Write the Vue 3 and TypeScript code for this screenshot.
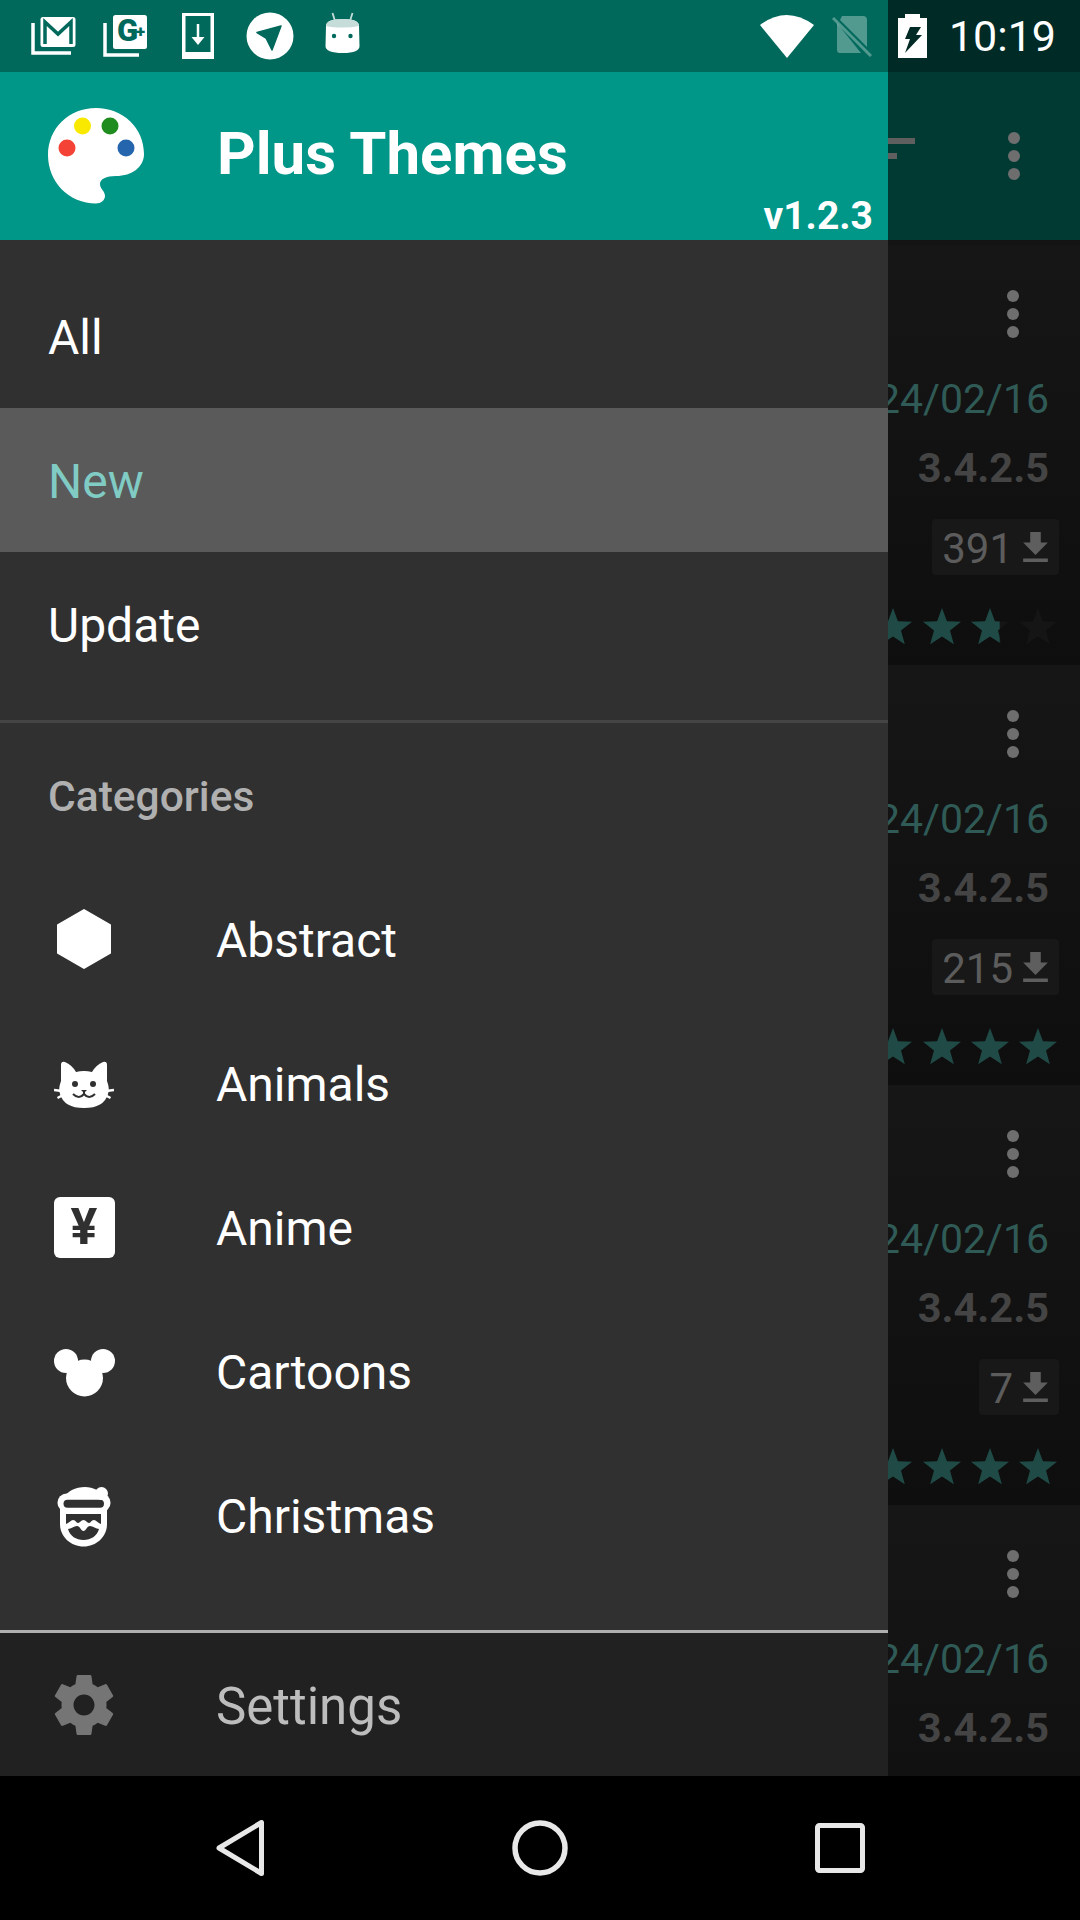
<script setup lang="ts">
interface MenuItem {
  label: string
  icon: string
}

interface AppCard {
  downloads: number
  rating: number
}

const categories: MenuItem[] = [
  { label: 'Abstract', icon: 'hexagon' },
  { label: 'Animals', icon: 'cat' },
  { label: 'Anime', icon: 'yen' },
  { label: 'Cartoons', icon: 'mouse' },
  { label: 'Christmas', icon: 'santa' },
]

// last card runs off the bottom of the screen, only its date and version show
const cards: AppCard[] = [
  { downloads: 391, rating: 3.7 },
  { downloads: 215, rating: 5 },
  { downloads: 7, rating: 5 },
  { downloads: 0, rating: 0 },
]

const starPoints = (cx: number) => {
  const pts: string[] = []
  for (let i = 0; i < 10; i++) {
    const r = i % 2 === 0 ? 20 : 8.4
    const a = (Math.PI / 5) * i - Math.PI / 2
    pts.push(`${(cx + r * Math.cos(a)).toFixed(1)},${(20 + r * Math.sin(a)).toFixed(1)}`)
  }
  return pts.join(' ')
}

const starCenters = [24, 72, 121, 169, 217]
</script>

<template>
  <div class="phone">
    <div class="screen">
      <!-- app behind the drawer -->
      <div class="app">
        <div class="app-status"></div>
        <div class="app-toolbar">
          <div class="filter-icon">
            <span class="bar long"></span>
            <span class="bar short"></span>
            <span class="bar tiny"></span>
          </div>
          <div class="dots"><i></i><i></i><i></i></div>
        </div>
        <div class="app-list">
          <div v-for="(card, i) in cards" :key="i" class="card">
            <div class="dots"><i></i><i></i><i></i></div>
            <div class="date">24/02/16</div>
            <div class="version">3.4.2.5</div>
            <template v-if="card.downloads">
              <div class="badge">
                <span class="count">{{ card.downloads }}</span>
                <svg width="27" height="30" viewBox="4.5 3 15 17">
                  <path fill="#5e5e5e" d="M19 9h-4V3H9v6H5l7 7 7-7zM5 18v2h14v-2H5z" />
                </svg>
              </div>
              <svg class="stars" width="241" height="40" viewBox="0 0 241 40">
                <defs>
                  <clipPath :id="`fill-${i}`">
                    <rect x="0" y="0" :width="card.rating * 48.3" height="40" />
                  </clipPath>
                </defs>
                <polygon v-for="c in starCenters" :key="c" :points="starPoints(c)" fill="#151515" />
                <g :clip-path="`url(#fill-${i})`">
                  <polygon v-for="c in starCenters" :key="c" :points="starPoints(c)" fill="#1f4a46" />
                </g>
              </svg>
            </template>
          </div>
        </div>
      </div>

      <!-- drawer -->
      <aside class="drawer">
        <div class="drawer-status"></div>
        <header class="drawer-header">
          <svg class="palette" width="96" height="96" viewBox="0 0 96 96">
            <path fill="#fff" d="M48 0C75 0 96 20 96 46C96 59 84 68 68 68C58 68 52 71 52 76C52 81 57 83 57 88C57 92 53 95.500 48 95.500C21 95.500 0 74 0 47C0 20 21 0 48 0Z" />
            <circle cx="34.500" cy="18" r="8.500" fill="#f9e800" />
            <circle cx="62" cy="18" r="8.500" fill="#1e8c1e" />
            <circle cx="19" cy="40" r="8.500" fill="#f44336" />
            <circle cx="78" cy="40" r="8.500" fill="#2565ad" />
          </svg>
          <h1 class="title">Plus Themes</h1>
          <span class="version-tag">v1.2.3</span>
        </header>

        <nav class="drawer-body">
          <div class="section">
            <div class="row plain">All</div>
            <div class="row plain selected">New</div>
            <div class="row plain">Update</div>
          </div>
          <div class="divider"></div>
          <div class="subheader">Categories</div>
          <div v-for="item in categories" :key="item.label" class="row">
            <span class="row-icon">
              <svg v-if="item.icon === 'hexagon'" class="lift" width="54" height="60" viewBox="0 0 54 60">
                <path fill="#fff" stroke="#fff" stroke-width="2" stroke-linejoin="round" d="M27 1L53 16V44L27 59L1 44V16Z" />
              </svg>
              <svg v-else-if="item.icon === 'cat'" width="60" height="48" viewBox="0 0 60 48">
                <path fill="#fff" d="M7 4Q7 0 11 1Q18 4 22 11Q30 9 38 11Q42 4 49 1Q53 0 53 4L53 20Q56 28 54 33Q50 47 30 47Q10 47 6 33Q4 28 7 20Z" />
                <path stroke="#fff" stroke-width="2.500" fill="none" d="M0 29L8 30M3.500 37L10 33.500M60 29L52 30M56.500 37L50 33.500" />
                <circle cx="21" cy="23" r="3" fill="#303030" />
                <circle cx="39" cy="23" r="3" fill="#303030" />
                <path stroke="#303030" stroke-width="2" fill="none" d="M19 33Q25 39 30 33Q35 39 41 33M30 33V31" />
                <path fill="#303030" d="M27 29H33L30 32Z" />
              </svg>
              <span v-else-if="item.icon === 'yen'" class="yen lift">¥</span>
              <svg v-else-if="item.icon === 'mouse'" width="61" height="48" viewBox="0 0 61 48">
                <circle cx="12" cy="12" r="12" fill="#fff" />
                <circle cx="49" cy="12" r="12" fill="#fff" />
                <circle cx="30.500" cy="29" r="18.500" fill="#fff" />
              </svg>
              <svg v-else-if="item.icon === 'santa'" width="54" height="60" viewBox="0 0 54 60">
                <path fill="#fff" d="M3 20V37C3 50 14 59.500 26.500 59.500C39 59.500 50 50 50 37V20Z" />
                <path fill="#303030" d="M9 27H44V37C41 36 39 33 37 33C34 33 34 36 32 36C30 36 29 33 26.500 33C24 33 23 36 21 36C19 36 19 33 16 33C14 33 12 36 9 37Z" />
                <path fill="#303030" d="M11 42C14 42 17 39 20 39C23 39 24 44 26.500 44C29 44 30 39 33 39C36 39 39 42 42 42C40 49 34 53 26.500 53C19 53 13 49 11 42Z" />
                <path fill="#fff" d="M7 12C9 4 19 0 28 0C32 0 36 1 40 3L46 10V14H7Z" />
                <rect x="0.500" y="6.500" width="53" height="18.500" rx="9" fill="#fff" />
                <rect x="6.500" y="12.700" width="40.500" height="8" rx="4" fill="#303030" />
                <circle cx="44.500" cy="6.500" r="6.500" fill="#fff" />
              </svg>
            </span>
            <span class="row-label">{{ item.label }}</span>
          </div>
        </nav>

        <footer class="drawer-footer">
          <span class="row-icon">
            <svg width="72" height="72" viewBox="0 0 24 24">
              <path fill="#757575" d="M19.430 12.980c.04-.32.07-.64.07-.98s-.03-.66-.07-.98l2.110-1.650c.19-.15.24-.42.12-.64l-2-3.460c-.12-.22-.39-.3-.61-.22l-2.490 1c-.52-.4-1.080-.73-1.690-.98l-.38-2.650C14.460 2.180 14.250 2 14 2h-4c-.25 0-.46.18-.49.42l-.38 2.650c-.61.25-1.170.59-1.690.98l-2.490-1c-.23-.09-.49 0-.61.22l-2 3.460c-.13.22-.07.49.12.64l2.110 1.650c-.04.32-.07.65-.07.98s.03.66.07.98l-2.110 1.650c-.19.15-.24.42-.12.64l2 3.460c.12.22.39.3.61.22l2.490-1c.52.4 1.080.73 1.690.98l.38 2.650c.03.24.24.42.49.42h4c.25 0 .46-.18.49-.42l.38-2.650c.61-.25 1.170-.59 1.690-.98l2.490 1c.23.09.49 0 .61-.22l2-3.460c.12-.22.07-.49-.12-.64l-2.110-1.650zM12 15.500c-1.930 0-3.500-1.570-3.500-3.500s1.570-3.500 3.500-3.500 3.500 1.570 3.500 3.500-1.570 3.500-3.500 3.500z" />
            </svg>
          </span>
          <span class="row-label settings">Settings</span>
        </footer>
      </aside>

      <!-- status bar icons sit above both the drawer and the app -->
      <div class="status-icons">
        <div class="status-left">
          <svg width="72" height="72" viewBox="0 0 72 72">
            <path fill="none" stroke="#fff" stroke-width="3.500" d="M15 23V53H53" />
            <rect x="22.500" y="17" width="35" height="30" rx="2.500" fill="#fff" />
            <path fill="none" stroke="#00695c" stroke-width="3.500" d="M27 44V22L40 34L53 22V44" />
          </svg>
          <svg width="72" height="72" viewBox="0 0 72 72">
            <path fill="none" stroke="#fff" stroke-width="3.500" d="M15 23V55H49" />
            <rect x="23" y="15" width="34" height="34" rx="2.500" fill="#fff" />
            <text x="27" y="41" class="gplus-g">G</text>
            <text x="46" y="37" class="gplus-plus">+</text>
          </svg>
          <svg width="72" height="72" viewBox="0 0 72 72">
            <path fill="#fff" fill-rule="evenodd" d="M20 13H52V59H20ZM23.500 16V52H48.500V16Z" />
            <path fill="none" stroke="#fff" stroke-width="2.500" d="M36 24V40" />
            <path fill="#fff" d="M29.500 37H42.500L36 45Z" />
          </svg>
          <svg width="72" height="72" viewBox="0 0 72 72">
            <circle cx="36" cy="36" r="23.500" fill="#fff" />
            <path fill="#00695c" stroke="#00695c" stroke-width="1.500" stroke-linejoin="round" d="M47 26L23 32.500L32 38L38 50Z" />
          </svg>
          <svg width="72" height="72" viewBox="0 0 72 72">
            <path fill="#fff" d="M20 26Q20 19 37 19Q53 19 53 26L53.500 46Q53.500 53 37 53Q19.500 53 19.500 46Z" />
            <path fill="#c5dcd9" d="M20 26Q20 19 37 19Q53 19 53 26Q46 27.500 37 27.500Q27 27.500 20 26Z" />
            <circle cx="28" cy="36" r="2.200" fill="#00695c" />
            <circle cx="44.500" cy="36" r="2.200" fill="#00695c" />
            <path stroke="#c5dcd9" stroke-width="1.800" d="M26.500 13L29 21M46.500 13L44 21" />
          </svg>
        </div>
        <div class="status-right">
          <svg class="wifi" width="54" height="44" viewBox="0 0 54 44">
            <path fill="#fff" d="M0 11Q26.500 -9 54 11L27 44Z" />
          </svg>
          <svg class="sim" width="40" height="42" viewBox="0 0 40 42">
            <path fill="#fff" fill-opacity="0.32" d="M8 5L10 1H31Q35 1 35 5V32ZM5 8L29 38H8Q5 38 5 35Z" />
            <path stroke="#fff" stroke-opacity="0.32" stroke-width="3" d="M1 3L39 41" />
          </svg>
          <svg class="battery" width="29" height="44" viewBox="0 0 29 44">
            <path fill="#fff" d="M7 0H22V4H29V44H0V4H7Z" />
            <path fill="#002a25" d="M12 13H23L18 21H24L7 39L12 25H7Z" />
          </svg>
          <span class="clock">10:19</span>
        </div>
      </div>
    </div>

    <div class="navbar">
      <svg width="48" height="56" viewBox="0 0 48 56">
        <path fill="none" stroke="#e8e8e8" stroke-width="5" stroke-linejoin="round" d="M45.500 2.500V53.500L3 28Z" />
      </svg>
      <svg width="56" height="56" viewBox="0 0 56 56">
        <circle cx="28" cy="28" r="25" fill="none" stroke="#e8e8e8" stroke-width="5.500" />
      </svg>
      <svg width="50" height="50" viewBox="0 0 50 50">
        <rect x="2.500" y="2.500" width="45" height="45" rx="2" fill="none" stroke="#e8e8e8" stroke-width="5" />
      </svg>
    </div>
  </div>
</template>

<style>
html,
body {
  margin: 0;
  background: #000;
}
</style>

<style scoped>
.phone {
  width: 1080px;
  height: 1920px;
  display: flex;
  flex-direction: column;
  font-family: Roboto, "Liberation Sans", sans-serif;
  overflow: hidden;
}

.screen {
  position: relative;
  height: 1776px;
  flex: none;
  overflow: hidden;
}

/* app behind drawer */
.app {
  height: 100%;
  display: flex;
  flex-direction: column;
  background: #141414;
}

.app-status {
  height: 72px;
  flex: none;
  background: #002a25;
}

.app-toolbar {
  height: 168px;
  flex: none;
  background: #003a33;
  display: flex;
  align-items: center;
  justify-content: flex-end;
  padding-right: 60px;
  gap: 93px;
  box-sizing: border-box;
}

.filter-icon {
  display: flex;
  flex-direction: column;
  gap: 9px;
  width: 60px;
}

.bar {
  display: block;
  height: 6px;
  background: #5f5f5f;
}

.bar.long {
  width: 60px;
}

.bar.short {
  width: 42px;
}

.bar.tiny {
  width: 24px;
}

.dots {
  display: flex;
  flex-direction: column;
  gap: 6px;
  width: 12px;
}

.dots i {
  display: block;
  width: 12px;
  height: 12px;
  border-radius: 50%;
  background: #6e6e6e;
}

.app-list {
  display: flex;
  flex-direction: column;
  padding-top: 5px;
}

.card {
  height: 420px;
  flex: none;
  background: linear-gradient(#161616, #0e0e0e);
  display: flex;
  flex-direction: column;
  align-items: flex-end;
  padding: 45px 21px 0 0;
  box-sizing: border-box;
}

.card .dots {
  margin-right: 40px;
}

.date {
  margin-top: 37px;
  padding-right: 10px;
  font-size: 41px;
  line-height: 48px;
  color: #2f5a56;
}

.version {
  margin-top: 21px;
  padding-right: 10px;
  font-size: 41.500px;
  line-height: 48px;
  font-weight: 700;
  color: #444;
}

.badge {
  margin-top: 27px;
  height: 56px;
  padding: 0 10px;
  display: flex;
  align-items: center;
  gap: 9px;
  font-size: 42px;
  color: #5c5c5c;
  background: #181818;
  border-radius: 4px;
}

.count {
  padding-top: 3px;
}

.stars {
  margin-top: 33px;
  margin-right: -3px;
}

/* drawer */
.drawer {
  position: absolute;
  top: 0;
  left: 0;
  bottom: 0;
  width: 888px;
  background: #303030;
  display: flex;
  flex-direction: column;
}

.drawer-status {
  height: 72px;
  background: #00695c;
  flex: none;
}

.drawer-header {
  position: relative;
  height: 168px;
  flex: none;
  background: #009688;
  display: flex;
  align-items: center;
  padding-left: 48px;
  box-sizing: border-box;
  color: #fff;
}

.palette {
  flex: none;
  margin-right: 73px;
  margin-top: -1px;
}

.title {
  margin: 0 0 4px;
  font-size: 60px;
  font-weight: 700;
  line-height: 1;
}

.version-tag {
  position: absolute;
  right: 15px;
  bottom: 1px;
  font-size: 39px;
  font-weight: 700;
}

.drawer-body {
  flex: 1;
  display: flex;
  flex-direction: column;
}

.section {
  padding: 24px 0;
}

.row {
  height: 144px;
  display: flex;
  align-items: center;
  color: #fff;
  font-size: 48px;
  padding-left: 48px;
  box-sizing: border-box;
}

.row.plain {
  padding-top: 2px;
}

.row.selected {
  background: #5a5a5a;
  color: #80cbc4;
}

.divider {
  height: 3px;
  background: #454545;
}

.subheader {
  height: 146px;
  display: flex;
  align-items: center;
  padding-left: 48px;
  font-size: 42.500px;
  font-weight: 500;
  color: #b0b0b0;
}

.row-icon {
  width: 72px;
  height: 72px;
  margin-right: 96px;
  flex: none;
  display: flex;
  align-items: center;
  justify-content: center;
}

.row-label {
  line-height: 1;
}

.lift {
  margin-bottom: 4px;
}

.yen {
  width: 61px;
  height: 61px;
  background: #fff;
  border-radius: 6px;
  color: #303030;
  font-size: 50px;
  font-weight: 700;
  display: flex;
  align-items: center;
  justify-content: center;
}

.drawer-footer {
  height: 146px;
  flex: none;
  background: #212121;
  border-top: 3px solid #b0b0b0;
  box-sizing: border-box;
  display: flex;
  align-items: center;
  padding-left: 48px;
  color: #bdbdbd;
  font-size: 51px;
}

.settings {
  margin-top: 4px;
}

/* status bar */
.status-icons {
  position: absolute;
  top: 0;
  left: 0;
  right: 0;
  height: 72px;
  display: flex;
  justify-content: space-between;
  align-items: center;
  padding: 0 24px 0 18px;
  box-sizing: border-box;
}

.status-left,
.status-right {
  display: flex;
  align-items: center;
}

.gplus-g {
  font-family: Roboto, sans-serif;
  font-weight: 900;
  font-size: 31px;
  fill: #00695c;
}

.gplus-plus {
  font-family: Roboto, sans-serif;
  font-weight: 900;
  font-size: 17px;
  fill: #00695c;
}

.wifi {
  margin-right: 18px;
}

.sim {
  margin-right: 26px;
}

.battery {
  margin-right: 22px;
}

.clock {
  color: #fff;
  font-size: 43px;
  line-height: 1;
}

/* nav bar */
.navbar {
  height: 144px;
  flex: none;
  background: #000;
  display: grid;
  grid-template-columns: repeat(3, 300px);
  padding: 0 90px;
  justify-items: center;
  align-items: center;
}
</style>
